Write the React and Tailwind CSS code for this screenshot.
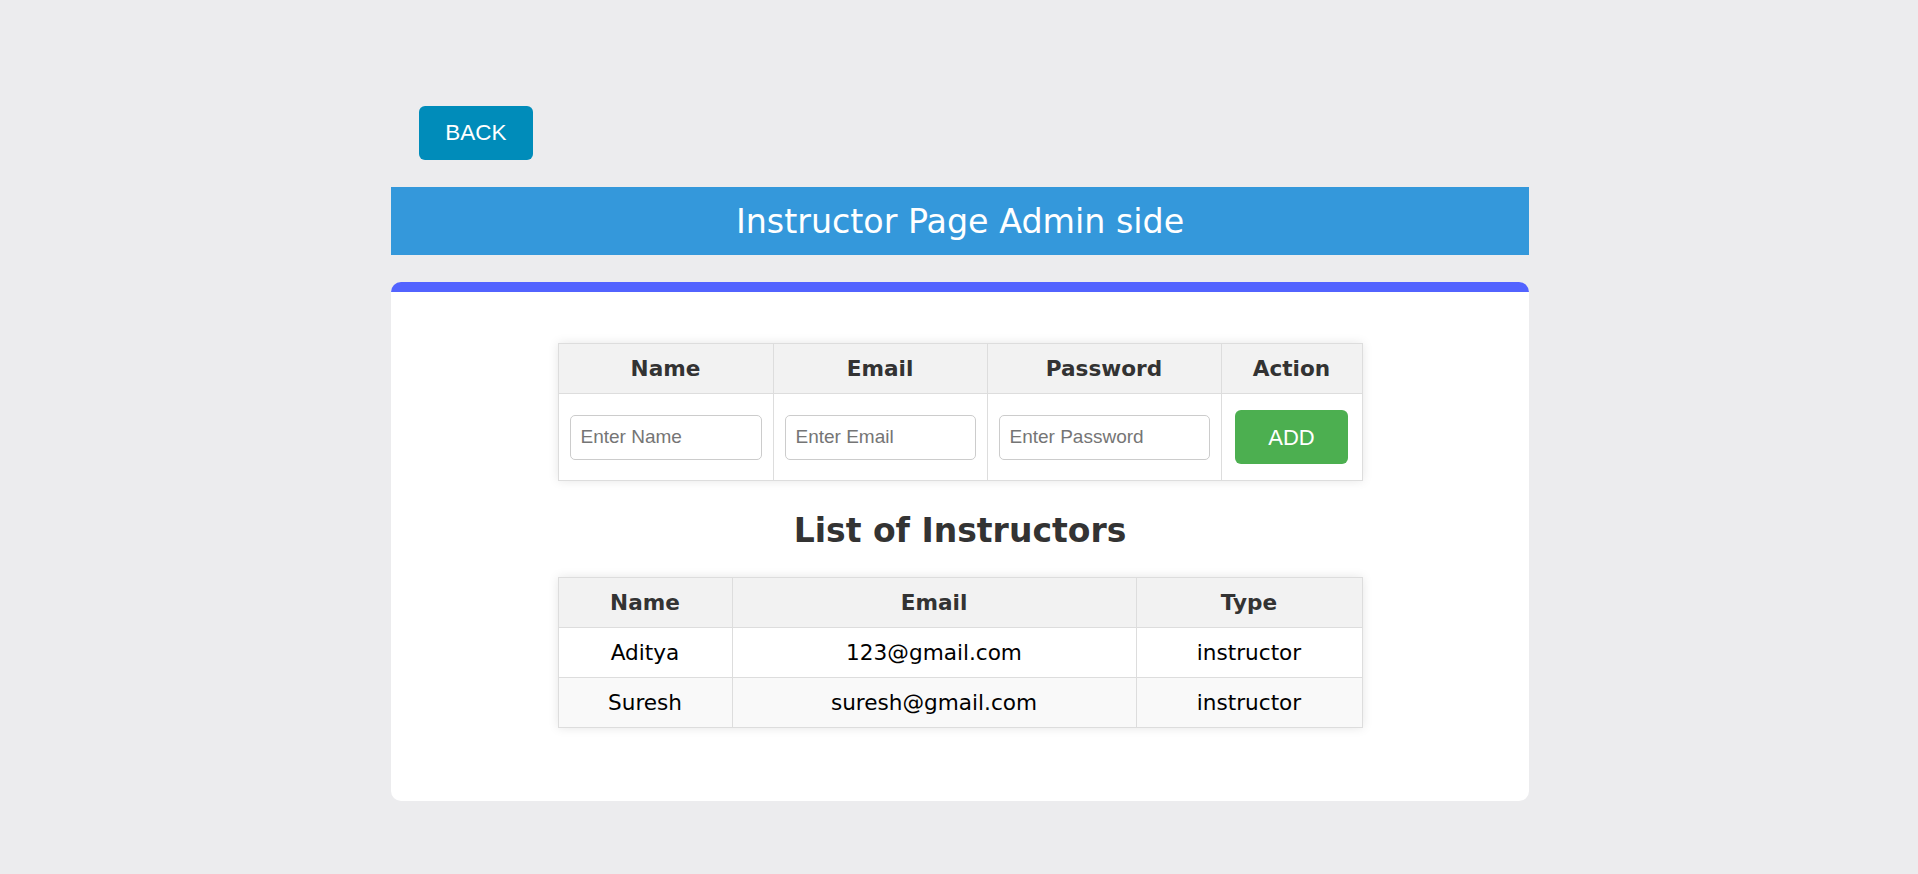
import React from "react";

const instructors = [
    { name: "Aditya", email: "123@gmail.com", type: "instructor" },
    { name: "Suresh", email: "suresh@gmail.com", type: "instructor" },
];

const sans = "font-['DejaVu_Sans',Verdana,sans-serif]";
const arial = "font-['Liberation_Sans',Arial,sans-serif]";

export default function App() {
    return (
        <div className="min-h-screen bg-[#ececee] pt-[106px] pb-[75px] pl-[2px]">
            <div className="mx-auto w-[1138px]">
                <button className={`${arial} ml-[28px] h-[54px] w-[114px] rounded-[6px] bg-[#008cba] text-[22.5px] text-white`}>
                    BACK
                </button>

                <div className={`${sans} mt-[27px] flex h-[68px] items-center justify-center bg-[#3498db] pt-[2px] text-[33.3px] text-white`}>
                    Instructor Page Admin side
                </div>

                <div className="mt-[27px] rounded-[10px] border-t-[10px] border-[#5263ff] bg-white pt-[51px] pb-[73px]">
                    <table className={`${sans} mx-auto border-collapse text-[21.6px] shadow-[0_0_10px_rgba(0,0,0,0.1)]`}>
                        <thead>
                            <tr className="h-[50px] bg-[#f2f2f2] font-bold text-[#333]">
                                <th className="w-[215px] border border-[#ddd] pt-[2px]">Name</th>
                                <th className="w-[214px] border border-[#ddd] pt-[2px]">Email</th>
                                <th className="w-[234px] border border-[#ddd] pt-[2px]">Password</th>
                                <th className="w-[141px] border border-[#ddd] pt-[2px]">Action</th>
                            </tr>
                        </thead>
                        <tbody>
                            <tr className="h-[87px]">
                                <td className="border border-[#ddd] px-[11px]">
                                    <input placeholder="Enter Name" className={`${arial} h-[45px] w-full rounded-[5px] border border-[#ccc] px-[10px] text-[19px] placeholder:text-[#757575]`} />
                                </td>
                                <td className="border border-[#ddd] px-[11px]">
                                    <input placeholder="Enter Email" className={`${arial} h-[45px] w-full rounded-[5px] border border-[#ccc] px-[10px] text-[19px] placeholder:text-[#757575]`} />
                                </td>
                                <td className="border border-[#ddd] px-[11px]">
                                    <input type="password" placeholder="Enter Password" className={`${arial} h-[45px] w-full rounded-[5px] border border-[#ccc] px-[10px] text-[19px] placeholder:text-[#757575]`} />
                                </td>
                                <td className="border border-[#ddd] text-center">
                                    <button className={`${arial} h-[54px] w-[113px] rounded-[6px] bg-[#4caf50] text-[22px] text-white`}>ADD</button>
                                </td>
                            </tr>
                        </tbody>
                    </table>

                    <h2 className={`${sans} mt-[31px] mb-[27px] text-center text-[33px] leading-[38px] font-bold text-[#333]`}>
                        List of Instructors
                    </h2>

                    <table className={`${sans} mx-auto border-collapse text-center text-[21.6px] shadow-[0_0_10px_rgba(0,0,0,0.1)]`}>
                        <thead>
                            <tr className="h-[50px] bg-[#f2f2f2] font-bold text-[#333]">
                                <th className="w-[174px] border border-[#ddd] pt-[2px]">Name</th>
                                <th className="w-[404px] border border-[#ddd] pt-[2px]">Email</th>
                                <th className="w-[226px] border border-[#ddd] pt-[2px]">Type</th>
                            </tr>
                        </thead>
                        <tbody>
                            {instructors.map((ins, i) => (
                                <tr key={ins.email} className={`h-[50px] text-black ${i % 2 === 1 ? "bg-[#f9f9f9]" : "bg-white"}`}>
                                    <td className="border border-[#ddd] pt-[2px]">{ins.name}</td>
                                    <td className="border border-[#ddd] pt-[2px]">{ins.email}</td>
                                    <td className="border border-[#ddd] pt-[2px]">{ins.type}</td>
                                </tr>
                            ))}
                        </tbody>
                    </table>
                </div>
            </div>
        </div>
    );
}
